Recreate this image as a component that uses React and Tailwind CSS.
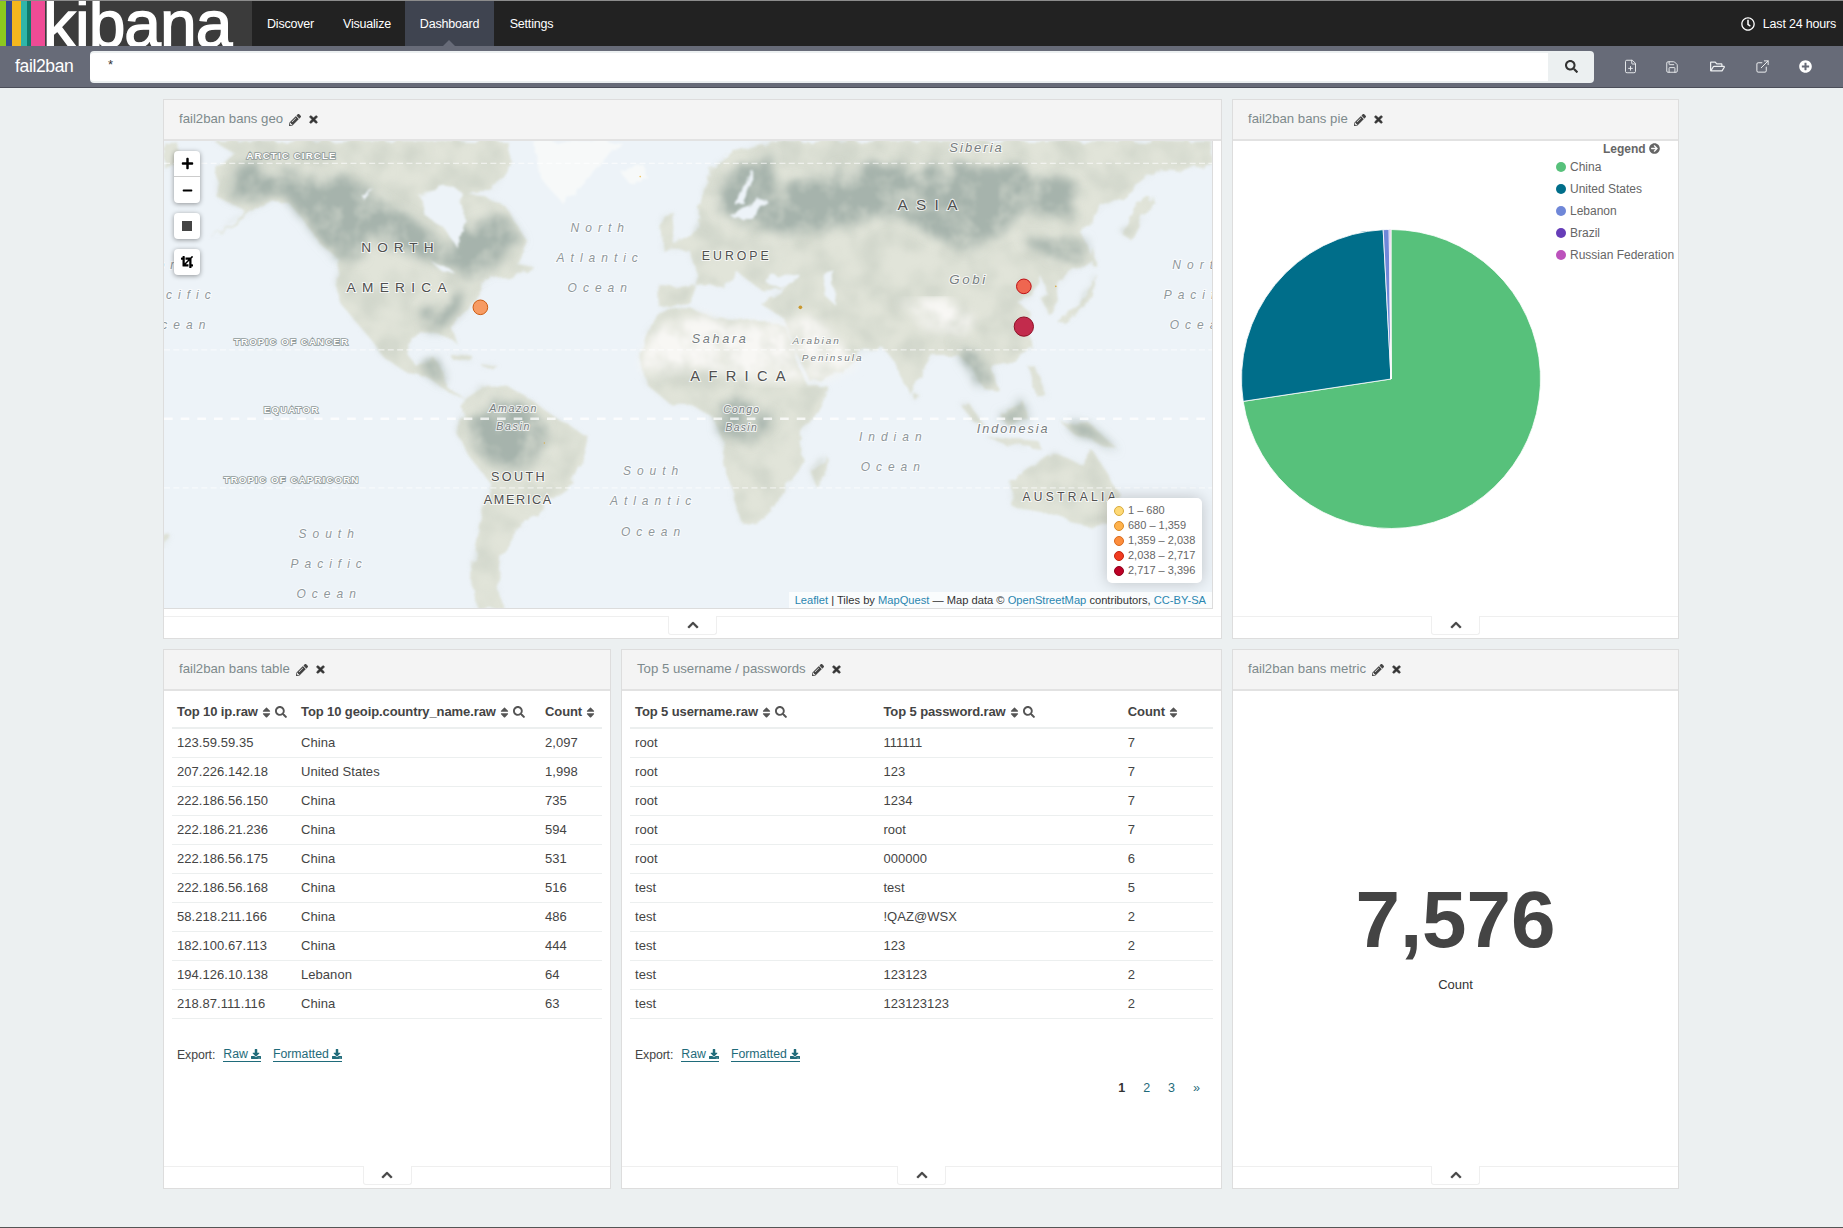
import React from "react";
import { FaPencilAlt, FaTimes, FaSearch, FaSort, FaDownload, FaChevronUp, FaPlusCircle, FaArrowCircleRight, FaCrop, FaPlus, FaMinus, FaRegClock, FaRegFolderOpen } from "react-icons/fa";
import { FilePlus, Save, ExternalLink } from "lucide-react";

const NAV = [
  ["Discover", "w-[77px]"],
  ["Visualize", "w-[76px]"],
  ["Dashboard", "w-[89px] bg-[#3f4450]"],
  ["Settings", "w-[75px]"],
];

function Logo() {
  return (
    <div className="flex h-full w-[252px] shrink-0 overflow-hidden bg-[#3b3b3b]">
      <div className="w-[6px] bg-[#8cc81f]" />
      <div className="w-[6px] bg-[#34488f]" />
      <div className="w-[9px] bg-[#f4b71e]" />
      <div className="w-[6px] bg-[#2fb5a9]" />
      <div className="w-[4px] bg-[#0f7a6b]" />
      <div className="w-[14px] bg-[#ef4b95]" />
      <span className="-ml-[2px] text-[66px] leading-[46px] tracking-[-1px] text-white [-webkit-text-stroke:1.4px_white]">kibana</span>
    </div>
  );
}

function TopNav() {
  return (
    <div className="flex h-[46px] items-center border-t border-[#8c8c8c] bg-[#222222] pr-[7px] text-[12.5px] text-white">
      <Logo />
      {NAV.map(([t, c]) => (
        <div key={t} className={"relative flex h-full items-center justify-center pt-[1px] " + c}>
          <span className="tracking-[-0.2px]">{t}</span>
          {t === "Dashboard" && (
            <span className="absolute bottom-0 left-[38px] h-0 w-0 border-x-[6px] border-b-[6px] border-x-transparent border-b-[#676b78]" />
          )}
        </div>
      ))}
      <div className="ml-auto flex items-center gap-[8px] pt-[1px]">
        <FaRegClock className="text-[14px]" />
        <span className="tracking-[-0.2px]">Last 24 hours</span>
      </div>
    </div>
  );
}

function SubBar() {
  const icons = "text-[#eceef0]";
  return (
    <div className="flex h-[42px] items-center border-b border-[#4b4e59] bg-[#676b78] pl-[15px]">
      <span className="w-[75px] text-[17.5px] tracking-[-0.35px] text-white">fail2ban</span>
      <div className="flex h-[32px] w-[1504px] overflow-hidden rounded-[4px] bg-[#ecf0f1]">
        <div className="my-[2px] flex-1 rounded-l-[4px] bg-white pl-[18px] text-[13px] leading-[24px] text-[#333]">*</div>
        <div className="flex w-[46px] items-center justify-center text-[#333] text-[13px]"><FaSearch /></div>
      </div>
      <div className={"ml-[29px] flex w-[196px] items-center " + icons}>
        <div className="flex w-[42px] justify-start"><FilePlus size={15} strokeWidth={1.5} /></div>
        <div className="flex w-[45px] justify-start"><Save size={14} strokeWidth={1.6} /></div>
        <div className="flex w-[45px] justify-start"><FaRegFolderOpen className="text-[15px]" /></div>
        <div className="flex w-[44px] justify-start"><ExternalLink size={15} strokeWidth={1.6} /></div>
        <div><FaPlusCircle className="text-[13px] text-white" /></div>
      </div>
    </div>
  );
}

function Panel({ title, className, children }) {
  return (
    <div className={"flex flex-col border border-[#dddddd] bg-white " + className}>
      <div className="flex h-[41px] shrink-0 items-center gap-[6px] border-b-2 border-[#e2e2e2] bg-[#f4f4f4] pl-[15px] text-[13.2px] text-[#7d8a8c]">
        <span className="-mt-[2px]">{title}</span>
        <FaPencilAlt className="text-[12px] text-[#444]" />
        <FaTimes stroke="currentColor" strokeWidth={35} className="ml-[1px] text-[11px] text-[#333]" />
      </div>
      <div className="relative min-h-0 flex-1">{children}</div>
      <div className="flex h-[22px] shrink-0 justify-center border-t border-[#efefef]">
        <div className="-mt-[1px] flex h-[19px] w-[49px] items-center justify-center rounded-b-[3px] border-x border-b border-[#efefef] bg-white">
          <FaChevronUp stroke="currentColor" strokeWidth={20} className="text-[12px] text-[#444]" />
        </div>
      </div>
    </div>
  );
}

const ITALIC = { italic: true, fill: "#8f979b", size: 36, ls: 18 };
const ITALIC_D = { italic: true, fill: "#777d80", size: 33, ls: 5 };
const CONT = { fill: "#4f4f4f", size: 41 };
const LINE = { fill: "#ffffff", stroke: "#8f9999", size: 29, bold: true, ls: 3.5, sw: 5 };

const LABELS = [
  ["ARCTIC CIRCLE", 383, 53, LINE],
  ["TROPIC OF CANCER", 383, 612, LINE],
  ["EQUATOR", 383, 818, LINE],
  ["TROPIC OF CAPRICORN", 383, 1027, LINE],
  ["NORTH", 710, 333, { ...CONT, ls: 18 }],
  ["AMERICA", 708, 453, { ...CONT, ls: 19 }],
  ["SOUTH", 1066, 1022, { ...CONT, ls: 7, size: 38 }],
  ["AMERICA", 1064, 1090, { ...CONT, ls: 5, size: 38 }],
  ["Amazon", 1050, 815, { ...ITALIC_D, size: 32 }],
  ["Basin", 1050, 869, { ...ITALIC_D, size: 32 }],
  ["North", 1310, 273, ITALIC],
  ["Atlantic", 1310, 363, ITALIC],
  ["Ocean", 1310, 453, ITALIC],
  ["South", 1470, 1005, ITALIC],
  ["Atlantic", 1470, 1095, ITALIC],
  ["Ocean", 1470, 1187, ITALIC],
  ["South", 496, 1195, ITALIC],
  ["Pacific", 496, 1285, ITALIC],
  ["Ocean", 496, 1375, ITALIC],
  ["North", 115, 385, { ...ITALIC, end: true }],
  ["Pacific", 158, 475, { ...ITALIC, end: true }],
  ["Ocean", 142, 565, { ...ITALIC, end: true }],
];

const LABELS_R = [
  ["Siberia", 862, 32, { ...ITALIC_D, size: 39, ls: 6 }],
  ["ASIA", 727, 207, { ...CONT, size: 46, ls: 25 }],
  ["EUROPE", 142, 357, { ...CONT, size: 37, ls: 9 }],
  ["Gobi", 838, 430, { ...ITALIC_D, size: 40, ls: 8 }],
  ["Sahara", 92, 607, { ...ITALIC_D, size: 38, ls: 8 }],
  ["Arabian", 382, 610, { ...ITALIC_D, size: 30, ls: 6 }],
  ["Peninsula", 430, 660, { ...ITALIC_D, size: 30, ls: 6 }],
  ["AFRICA", 158, 721, { ...CONT, size: 44, ls: 25 }],
  ["Congo", 157, 818, { ...ITALIC_D, size: 31, ls: 4 }],
  ["Basin", 157, 872, { ...ITALIC_D, size: 31, ls: 4 }],
  ["Indian", 612, 902, ITALIC],
  ["Ocean", 612, 992, ITALIC],
  ["Indonesia", 972, 878, { ...ITALIC_D, size: 38, ls: 6 }],
  ["AUSTRALIA", 1145, 1082, { ...CONT, size: 36, ls: 10 }],
  ["North", 1450, 386, { ...ITALIC, start: true }],
  ["Pacific", 1424, 476, { ...ITALIC, start: true }],
  ["Ocean", 1442, 566, { ...ITALIC, start: true }],
];

function MapText({ items }) {
  return items.map(([t, x, y, s], i) => (
    <text
      key={i}
      x={x}
      y={y}
      textAnchor={s.end ? "end" : s.start ? "start" : "middle"}
      fontSize={s.size}
      fontStyle={s.italic ? "italic" : "normal"}
      fontWeight={s.bold ? 700 : 400}
      letterSpacing={s.ls}
      fill={s.fill}
      stroke={s.stroke || "#ffffff"}
      strokeOpacity={s.stroke ? 1 : 0.75}
      strokeWidth={s.sw || 6}
      paintOrder="stroke"
    >
      {t}
    </text>
  ));
}

const LAND_L = [
  "M135,295 L250,215 L200,190 L155,165 L160,90 L215,40 L150,0 L1030,0 L1040,70 L990,150 L905,150 L1020,190 L1090,300 L1060,370 L1115,380 L1030,410 L980,410 L930,480 L905,520 L860,560 L880,610 L860,590 L780,575 L740,590 L730,640 L760,680 L810,650 L830,680 L850,740 L900,770 L860,760 L790,710 L720,690 L660,650 L600,570 L540,500 L515,430 L520,350 L470,310 L430,250 L380,190 L320,175 L250,225 Z",
  "M900,770 L950,735 L1040,745 L1120,790 L1200,850 L1270,885 L1260,930 L1230,1000 L1210,1040 L1140,1090 L1130,1130 L1050,1170 L1010,1250 L1000,1330 L1020,1404 L940,1404 L925,1280 L955,1130 L980,1030 L920,950 L880,880 L900,810 Z",
  "M850,635 L930,650 L920,665 L860,650 Z",
  "M950,668 L1010,678 L960,682 Z",
  "M0,0 L35,0 L40,60 L0,80 Z",
  "M0,1190 L22,1185 L0,1225 Z",
];
const WATER_L = [
  "M770,170 L830,125 L890,150 L905,240 L880,320 L840,260 L780,220 Z",
  "M810,370 L850,378 L875,398 L835,392 Z",
  "M590,160 L630,145 L600,175 Z",
];
const FOREST_L = [
  "M520,100 L600,130 L770,250 L860,310 L890,270 L960,230 L1020,220 L1080,300 L1000,370 L900,410 L830,370 L760,350 L620,280 L590,350 L520,360 L470,300 L420,240 L370,170 L250,180 L190,170 L220,90 L300,70 L400,90 Z",
  "M780,500 L880,460 L920,470 L900,530 L850,560 L780,570 Z",
  "M920,850 L990,780 L1080,790 L1150,860 L1130,930 L1060,980 L980,970 L910,900 Z",
  "M775,680 L825,650 L845,730 L800,710 Z",
];
const WHITE_L = [
  "M1110,0 L1370,0 L1290,90 L1200,190 L1130,110 Z",
  "M1370,90 L1440,70 L1450,110 L1400,130 Z",
];
const LAND_R = [
  "M30,200 L60,90 L140,30 L250,0 L1568,0 L1568,70 L1400,90 L1300,170 L1240,200 L1170,270 L1210,350 L1140,400 L1080,470 L1050,400 L1030,470 L990,490 L1020,510 L1030,620 L960,660 L910,690 L920,740 L880,740 L840,670 L800,640 L730,640 L680,720 L660,760 L620,670 L580,620 L510,640 L470,680 L370,730 L310,620 L290,540 L215,490 L300,440 L220,450 L150,400 L100,440 L60,430 L0,440 L-90,430 L-90,500 L0,490 L30,410 L0,330 L-60,330 L0,290 L40,240 Z",
  "M-150,640 L-120,560 L-70,510 L0,500 L80,540 L230,545 L290,560 L320,660 L360,740 L420,740 L370,830 L330,900 L340,960 L280,1070 L200,1140 L160,1150 L110,1000 L100,900 L70,830 L0,790 L-60,790 L-130,730 Z",
  "M365,990 L415,950 L410,1000 L380,1040 Z",
  "M-88,250 L-50,210 L-40,320 L-80,330 Z",
  "M1300,280 L1340,200 L1395,165 L1350,260 L1330,300 Z",
  "M1100,540 L1170,490 L1230,400 L1195,490 L1130,545 Z",
  "M1205,310 L1225,380 L1205,370 Z",
  "M1020,680 L1040,680 L1075,770 L1045,770 Z",
  "M810,790 L840,790 L890,860 L860,850 Z",
  "M930,820 L1000,780 L1015,830 L960,860 Z",
  "M890,890 L1050,905 L1055,925 L950,915 Z",
  "M1110,840 L1200,850 L1285,925 L1160,885 Z",
  "M960,1020 L1100,940 L1180,970 L1210,930 L1290,1060 L1260,1150 L1200,1160 L1080,1120 L970,1100 Z",
  "M670,755 L690,765 L680,785 Z",
  "M1060,480 L1095,440 L1100,510 L1075,520 Z",
];
const WATER_R = [
  "M135,190 L155,130 L200,85 L172,150 L165,190 Z",
  "M120,225 L230,175 L240,190 L160,235 Z",
  "M240,395 L340,410 L300,445 L235,430 Z",
  "M405,400 L435,392 L440,495 L412,470 Z",
];
const FOREST_R = [
  "M180,250 L330,100 L560,70 L1000,80 L1160,130 L1150,230 L1000,210 L920,300 L800,320 L730,290 L620,220 L480,250 L270,280 Z",
  "M70,200 L120,80 L220,60 L260,50 L260,200 L180,250 Z",
  "M70,800 L150,770 L240,810 L240,870 L170,900 L90,880 Z",
  "M790,610 L860,630 L920,730 L860,730 Z",
  "M1000,300 L1190,290 L1170,370 L1050,340 Z",
  "M930,820 L1000,780 L1010,830 L960,860 Z",
  "M1130,845 L1200,855 L1280,925 L1160,885 Z",
];
const WHITE_R = [
  "M-140,640 L-100,560 L0,520 L290,560 L310,650 L350,720 L200,720 L0,680 L-140,690 Z",
  "M295,545 L370,530 L470,620 L500,680 L370,730 L320,640 Z",
  "M640,490 L780,480 L870,540 L820,580 L700,560 Z",
];

function Paths({ d, fill, filter, opacity }) {
  return (
    <g filter={filter} fill={fill} opacity={opacity}>
      {d.map((p, i) => <path key={i} d={p} />)}
    </g>
  );
}

function WorldMap() {
  return (
    <svg viewBox="0 0 3147 1404" preserveAspectRatio="none" className="block h-full w-full font-['Liberation_Sans',Arial,sans-serif]">
      <defs>
        <filter id="rough" x="-5%" y="-5%" width="110%" height="110%">
          <feTurbulence type="fractalNoise" baseFrequency="0.018" numOctaves="4" seed="4" result="n" />
          <feDisplacementMap in="SourceGraphic" in2="n" scale="34" />
          <feGaussianBlur stdDeviation="2.5" />
        </filter>
        <filter id="soft" x="-5%" y="-5%" width="110%" height="110%">
          <feTurbulence type="fractalNoise" baseFrequency="0.014" numOctaves="3" seed="9" result="n" />
          <feDisplacementMap in="SourceGraphic" in2="n" scale="70" result="d" />
          <feGaussianBlur in="d" stdDeviation="14" result="b" />
          <feColorMatrix in="n" type="matrix" values="0 0 0 0 0  0 0 0 0 0  0 0 0 0 0  0 0 0 1.5 0.1" result="m" />
          <feComposite in="b" in2="m" operator="in" result="c" />
          <feGaussianBlur in="c" stdDeviation="3" />
        </filter>
        <filter id="mottle" x="-5%" y="-5%" width="110%" height="110%">
          <feTurbulence type="fractalNoise" baseFrequency="0.012" numOctaves="3" seed="21" result="n" />
          <feDisplacementMap in="SourceGraphic" in2="n" scale="34" result="d" />
          <feGaussianBlur in="d" stdDeviation="5" result="b" />
          <feColorMatrix in="n" type="matrix" values="0 0 0 0 0  0 0 0 0 0  0 0 0 0 0  0 0 0 2.5 -0.9" result="m" />
          <feComposite in="b" in2="m" operator="in" result="c" />
          <feGaussianBlur in="c" stdDeviation="6" />
        </filter>
      </defs>
      <rect x="0" y="0" width="3147" height="1404" fill="#edf3f8" />
      <Paths d={LAND_L} fill="#e1e4d9" filter="url(#rough)" />
      <Paths d={LAND_L} fill="#c3cabf" filter="url(#mottle)" opacity="0.5" />
      <Paths d={FOREST_L} fill="#a6b3ac" filter="url(#soft)" />
      <Paths d={WATER_L} fill="#edf3f8" filter="url(#rough)" />
      <Paths d={WHITE_L} fill="#f7f9f9" filter="url(#rough)" />
      <g transform="translate(1578 0)">
        <Paths d={LAND_R} fill="#e1e4d9" filter="url(#rough)" />
        <Paths d={LAND_R} fill="#c3cabf" filter="url(#mottle)" opacity="0.5" />
        <Paths d={FOREST_R} fill="#a6b3ac" filter="url(#soft)" />
        <Paths d={WHITE_R} fill="#f8f7f4" filter="url(#soft)" />
        <Paths d={WATER_R} fill="#edf3f8" filter="url(#rough)" />
      </g>
      {[[67, 3, "18 10"], [628, 3, "18 10"], [835, 7, "26 24"], [1043, 3, "18 10"]].map(([y, w, dash]) => (
        <line key={y} x1="0" x2="3147" y1={y} y2={y} stroke="#ffffff" strokeWidth={w} strokeDasharray={dash} strokeOpacity="0.75" />
      ))}
      <MapText items={LABELS} />
      <g transform="translate(1578 0)"><MapText items={LABELS_R} /></g>
      <circle cx="950" cy="500" r="22" fill="#f79b63" stroke="#cc5a10" strokeWidth="3" />
      <circle cx="1142" cy="908" r="2" fill="#d9a93f" />
      <circle cx="1430" cy="107" r="2.5" fill="#f0c35a" />
      <g transform="translate(1578 0)">
        <circle cx="1004" cy="437" r="22" fill="#ef6650" stroke="#bd0e14" strokeWidth="3" />
        <circle cx="1004" cy="558" r="29" fill="#c22b4c" stroke="#8e0f24" strokeWidth="3" />
        <circle cx="333" cy="500" r="5.5" fill="#c9982f" />
        <circle cx="1100" cy="437" r="2.5" fill="#d9a93f" />
      </g>
    </svg>
  );
}

const CTRL = "flex w-[26px] items-center justify-center rounded-[4px] bg-white shadow-[0_1px_5px_rgba(0,0,0,0.4)]";

function MapPanel() {
  const legend = [
    ["1 – 680", "bg-[#fed976]", "border-[#d8ab3d]"],
    ["680 – 1,359", "bg-[#feb24c]", "border-[#d98a28]"],
    ["1,359 – 2,038", "bg-[#fd8d3c]", "border-[#d96a1c]"],
    ["2,038 – 2,717", "bg-[#f03b20]", "border-[#c4230e]"],
    ["2,717 – 3,396", "bg-[#bd0026]", "border-[#8e0019]"],
  ];
  return (
    <Panel title="fail2ban bans geo" className="h-[540px] w-[1059px]">
      <div className="h-full pr-[8px] pb-[7px]">
        <div className="relative h-full overflow-hidden border-b border-r border-[#dcdcdc]">
          <WorldMap />
          <div className="absolute left-[10px] top-[10px] flex flex-col gap-[10px]">
            <div className={CTRL + " flex-col text-[13px] text-black"}>
              <div className="flex h-[26px] w-full items-center justify-center border-b border-[#ccc]"><FaPlus /></div>
              <div className="flex h-[26px] w-full items-center justify-center"><FaMinus className="text-[11px]" /></div>
            </div>
            <div className={CTRL + " h-[26px]"}><div className="h-[10px] w-[10px] bg-[#444]" /></div>
            <div className={CTRL + " h-[26px] text-[12px] text-black"}><FaCrop /></div>
          </div>
          <div className="absolute right-[10px] top-[357px] flex h-[85px] w-[95px] flex-col justify-center rounded-[5px] bg-white pl-[7px] text-[11px] leading-[15px] text-[#666] shadow-[0_0_15px_rgba(0,0,0,0.2)]">
            {legend.map(([t, bg, b]) => (
              <div key={t} className="flex h-[15px] items-center gap-[4px] whitespace-nowrap">
                <span className={"h-[10px] w-[10px] shrink-0 rounded-full border " + bg + " " + b} />
                <span>{t}</span>
              </div>
            ))}
          </div>
          <div className="absolute bottom-0 right-0 flex h-[16px] w-[423px] items-center justify-end whitespace-pre bg-white/70 pr-[6px] text-[11.15px] text-[#333]">
            <span className="text-[#2a86b0]">Leaflet</span> | Tiles by <span className="text-[#2a86b0]">MapQuest</span> — Map data © <span className="text-[#2a86b0]">OpenStreetMap</span> contributors, <span className="text-[#2a86b0]">CC-BY-SA</span>
          </div>
        </div>
      </div>
    </Panel>
  );
}

const PIE = [
  [0, 261.4, "#57c17b"],
  [261.4, 357, "#006e8a"],
  [357, 359.3, "#6f87d8"],
  [359.3, 359.7, "#663db8"],
  [359.7, 360, "#bc52bc"],
];

function slice(a, b) {
  const R = 149.5, C = 150;
  const p = (t) => {
    const r = (t * Math.PI) / 180;
    return (C + R * Math.sin(r)).toFixed(2) + " " + (C - R * Math.cos(r)).toFixed(2);
  };
  return "M" + C + " " + C + " L" + p(a) + " A" + R + " " + R + " 0 " + (b - a > 180 ? 1 : 0) + " 1 " + p(b) + " Z";
}

function PiePanel() {
  const items = [
    ["China", "bg-[#57c17b]"],
    ["United States", "bg-[#006e8a]"],
    ["Lebanon", "bg-[#6f87d8]"],
    ["Brazil", "bg-[#663db8]"],
    ["Russian Federation", "bg-[#bc52bc]"],
  ];
  return (
    <Panel title="fail2ban bans pie" className="h-[540px] w-[447px]">
      <div className="flex h-full pl-[8px]">
        <svg viewBox="0 0 300 300" className="mt-[88px] h-[300px] w-[300px] shrink-0">
          {PIE.map(([a, b, c]) => <path key={c} d={slice(a, b)} fill={c} stroke="#ffffff" strokeWidth="0.8" />)}
        </svg>
        <div className="ml-[15px] flex flex-col text-[12px] text-[#666]">
          <div className="ml-[47px] flex h-[15px] items-center gap-[3px] font-bold text-[#666]">
            Legend <FaArrowCircleRight className="text-[11px]" />
          </div>
          <div className="flex flex-col">
            {items.map(([t, c]) => (
              <div key={t} className="flex h-[22px] items-center gap-[4px] whitespace-nowrap">
                <span className={"h-[10px] w-[10px] rounded-full " + c} />
                {t}
              </div>
            ))}
          </div>
        </div>
      </div>
    </Panel>
  );
}

function Th({ children, search }) {
  return (
    <th className="border-b-2 border-[#ecefef] px-[5px] pb-[6px] pt-0 text-left align-bottom text-[13px] font-bold leading-[18px] text-[#444]">
      <span className="inline-flex items-center gap-[2px] whitespace-nowrap tracking-[-0.1px]">
        {children}
        <FaSort className="text-[13px] text-[#555]" />
        {search && <FaSearch className="text-[12px] text-[#555]" />}
      </span>
    </th>
  );
}

function Export() {
  const link = "inline-flex items-center gap-[3px] border-b border-[#1f6b7a] leading-[14px] text-[#1f6b7a]";
  return (
    <div className="mt-[27px] flex items-center text-[12.3px] text-[#444]">
      <span className="tracking-[-0.1px]">Export:</span>
      <span className={"ml-[8px] " + link}>Raw <FaDownload className="text-[10px]" /></span>
      <span className={"ml-[12px] " + link}>Formatted <FaDownload className="text-[10px]" /></span>
    </div>
  );
}

function DataTable({ cols, heads, rows }) {
  return (
    <table className="w-full table-fixed border-collapse">
      <colgroup>
        {cols.map((c) => <col key={c} className={c} />)}
      </colgroup>
      <thead>
        <tr className="h-[37px]">
          {heads.map(([h, s]) => <Th key={h} search={s}>{h}</Th>)}
        </tr>
      </thead>
      <tbody>
        {rows.map((r, i) => (
          <tr key={i} className="h-[29px] border-b border-[#ecefef] text-[13px] text-[#444]">
            {r.map((c, j) => <td key={j} className="whitespace-nowrap px-[5px] py-0 tracking-[0.05px]">{c}</td>)}
          </tr>
        ))}
      </tbody>
    </table>
  );
}

const T1 = [
  ["123.59.59.35", "China", "2,097"],
  ["207.226.142.18", "United States", "1,998"],
  ["222.186.56.150", "China", "735"],
  ["222.186.21.236", "China", "594"],
  ["222.186.56.175", "China", "531"],
  ["222.186.56.168", "China", "516"],
  ["58.218.211.166", "China", "486"],
  ["182.100.67.113", "China", "444"],
  ["194.126.10.138", "Lebanon", "64"],
  ["218.87.111.116", "China", "63"],
];
const T2 = [
  ["root", "111111", "7"],
  ["root", "123", "7"],
  ["root", "1234", "7"],
  ["root", "root", "7"],
  ["root", "000000", "6"],
  ["test", "test", "5"],
  ["test", "!QAZ@WSX", "2"],
  ["test", "123", "2"],
  ["test", "123123", "2"],
  ["test", "123123123", "2"],
];

function App() {
  return (
    <div className="flex h-[1228px] w-[1843px] flex-col overflow-hidden border-b border-[#555] bg-[#ecf0f1] font-['Liberation_Sans',Arial,sans-serif]">
      <TopNav />
      <SubBar />
      <div className="ml-[163px] mt-[11px] flex w-[1517px] flex-col gap-[10px]">
        <div className="flex gap-[10px]">
          <MapPanel />
          <PiePanel />
        </div>
        <div className="flex gap-[10px]">
          <Panel title="fail2ban bans table" className="h-[540px] w-[448px]">
            <div className="px-[8px]">
              <DataTable
                cols={["w-[124px]", "w-[244px]", "w-[62px]"]}
                heads={[["Top 10 ip.raw", true], ["Top 10 geoip.country_name.raw", true], ["Count", false]]}
                rows={T1}
              />
              <div className="pl-[5px]"><Export /></div>
            </div>
          </Panel>
          <Panel title="Top 5 username / passwords" className="h-[540px] w-[601px]">
            <div className="pl-[8px] pr-[8px]">
              <DataTable
                cols={["w-[248px]", "w-[244px]", "w-[90px]"]}
                heads={[["Top 5 username.raw", true], ["Top 5 password.raw", true], ["Count", false]]}
                rows={T2}
              />
              <div className="pl-[5px]"><Export /></div>
              <div className="mt-[15px] flex justify-end gap-[18px] pr-[13px] text-[12.5px] text-[#1f6b7a]">
                <span className="font-bold text-[#333]">1</span>
                <span>2</span>
                <span>3</span>
                <span>»</span>
              </div>
            </div>
          </Panel>
          <Panel title="fail2ban bans metric" className="h-[540px] w-[447px]">
            <div className="flex h-full flex-col items-center justify-center pt-[10px] text-[#444]">
              <div className="text-[80px] font-bold leading-[92px]">7,576</div>
              <div className="mt-[10px] text-[13px] leading-[18px] text-[#333]">Count</div>
            </div>
          </Panel>
        </div>
      </div>
    </div>
  );
}

export default App;
